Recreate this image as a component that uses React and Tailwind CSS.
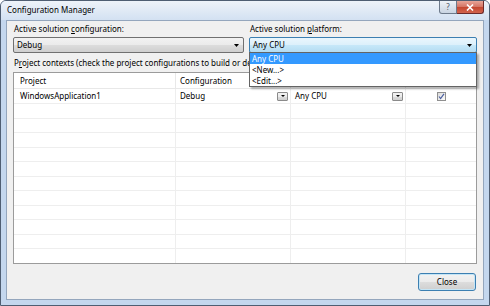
import React from "react";

const btnFace =
  "bg-[linear-gradient(to_bottom,#f2f2f2_0%,#ebebeb_50%,#dddddd_50%,#cfcfcf_100%)]";

const Arrow = () => (
  <svg width="5" height="3" viewBox="0 0 5 3">
    <path d="M0 0h5L2.5 3z" fill="#000" />
  </svg>
);

const Combo = ({ value, focused }) => (
  <div
    className={`h-[16px] flex items-center justify-between rounded-[2px] border pl-[3px] pr-[4px] ${
      focused
        ? "border-[#3c7fb1] bg-[linear-gradient(to_bottom,#eaf6fd_0%,#dcf0fb_50%,#c7e8f9_50%,#b4dcf2_100%)]"
        : `border-[#707070] ${btnFace}`
    }`}
  >
    <span>{value}</span>
    <Arrow />
  </div>
);

const CellButton = () => (
  <div
    className={`w-[11px] h-[9px] flex items-center justify-center border border-[#8a8a8a] rounded-[1px] ${btnFace}`}
  >
    <svg width="4" height="2" viewBox="0 0 4 2">
      <path d="M0 0h4L2 2z" fill="#000" />
    </svg>
  </div>
);

const Checkbox = () => (
  <div className="w-[9px] h-[9px] border border-[#8f8f8f] bg-gradient-to-br from-[#dcdcdc] to-[#fbfbfb] flex items-center justify-center">
    <svg width="7" height="7" viewBox="0 0 7 7">
      <path d="M1 3.5l1.6 2L6 0.8" stroke="#4b5fa0" strokeWidth="1.2" fill="none" />
    </svg>
  </div>
);

const rows = Array.from({ length: 11 }, (_, i) => i);

export default function App() {
  return (
    <div className="w-[490px] h-[306px] flex flex-col bg-[#c4d7ee] border border-[#4f5e72] rounded-t-[6px] overflow-hidden font-['Noto_Sans',sans-serif] text-[8px] leading-[10px] text-black">
      {/* title bar */}
      <div className="h-[19px] flex justify-between bg-gradient-to-b from-[#eef3f9] to-[#d3e1f2]">
        <div className="pl-[6px] pt-[4px]">Configuration Manager</div>
        <div className="flex pr-[5px]">
          <div className="w-[18px] h-[13px] border border-t-0 border-[#6d7a8b] rounded-bl-[3px] bg-gradient-to-b from-[#eef2f7] to-[#c9d4e2] flex items-center justify-center text-[#4a5566] text-[8px]">
            ?
          </div>
          <div className="w-[27px] h-[13px] border border-t-0 border-l-0 border-[#6b2a2a] rounded-br-[3px] bg-[linear-gradient(to_bottom,#e8a598_0%,#d47363_50%,#c4462f_50%,#d2634d_100%)] flex items-center justify-center">
            <svg width="8" height="7" viewBox="0 0 8 7">
              <path d="M1 0.5l6 6M7 0.5l-6 6" stroke="#fff" strokeWidth="1.6" />
            </svg>
          </div>
        </div>
      </div>

      {/* client area */}
      <div className="flex-1 mx-[5px] mb-[5px] border border-[#94a6bd] bg-[#f0f0f0] flex flex-col px-[6px] pt-[3px] pb-[8px]">
        <div className="grid grid-cols-[231px_1fr] gap-x-[5px]">
          <div>
            <div className="h-[10px] mb-[3px] pl-[1px]">
              Active solution <span className="underline">c</span>onfiguration:
            </div>
            <Combo value="Debug" />
          </div>
          <div className="relative">
            <div className="h-[10px] mb-[3px] pl-[1px]">
              Active solution <span className="underline">p</span>latform:
            </div>
            <Combo value="Any CPU" focused />
            {/* open drop-down list */}
            <div className="absolute left-0 right-0 top-[28px] z-10 bg-white border border-[#646464] shadow-[2px_2px_2px_rgba(0,0,0,0.3)]">
              <div className="h-[11px] leading-[11px] pl-[2px] bg-[#3399ff] text-white">Any CPU</div>
              <div className="h-[11px] leading-[11px] pl-[2px]">&lt;New...&gt;</div>
              <div className="h-[11px] leading-[11px] pl-[2px]">&lt;Edit...&gt;</div>
            </div>
          </div>
        </div>

        <div className="mt-[5px] h-[10px] pl-[1px] whitespace-nowrap">
          P<span className="underline">r</span>oject contexts (check the project
          configurations to build or deploy):
        </div>

        <div className="mt-[4px] flex-1 flex flex-col bg-white border border-[#9b9b9b]">
          <div className="h-[16px] shrink-0 grid grid-cols-[162px_115px_115px_1fr] border-b border-[#e8e8e8]">
            <div className="flex items-center pl-[6px] border-r border-[#e8e8e8]">Project</div>
            <div className="flex items-center pl-[4px] border-r border-[#e8e8e8]">Configuration</div>
            <div className="flex items-center pl-[4px] border-r border-[#e8e8e8]">Platform</div>
            <div className="flex items-center pl-[4px]">Build</div>
          </div>
          <div className="h-[15px] shrink-0 grid grid-cols-[162px_115px_115px_1fr] border-b border-[#eeeeee]">
            <div className="flex items-center pl-[6px] border-r border-[#eeeeee]">WindowsApplication1</div>
            <div className="flex items-center justify-between pl-[4px] pr-[2px] border-r border-[#eeeeee]">
              <span>Debug</span>
              <CellButton />
            </div>
            <div className="flex items-center justify-between pl-[4px] pr-[2px] border-r border-[#eeeeee]">
              <span>Any CPU</span>
              <CellButton />
            </div>
            <div className="flex items-center justify-center">
              <Checkbox />
            </div>
          </div>
          {rows.map((r) => (
            <div
              key={r}
              className="flex-1 grid grid-cols-[162px_115px_115px_1fr] border-b border-[#eeeeee] last:border-b-0"
            >
              <div className="border-r border-[#eeeeee]" />
              <div className="border-r border-[#eeeeee]" />
              <div className="border-r border-[#eeeeee]" />
              <div />
            </div>
          ))}
        </div>

        <div className="mt-[9px] flex justify-end pr-[1px]">
          <div
            className={`w-[58px] h-[18px] flex items-center justify-center rounded-[3px] border border-[#3c7fb1] ${btnFace} shadow-[inset_0_0_0_1px_#c4e5f6]`}
          >
            Close
          </div>
        </div>
      </div>
    </div>
  );
}
